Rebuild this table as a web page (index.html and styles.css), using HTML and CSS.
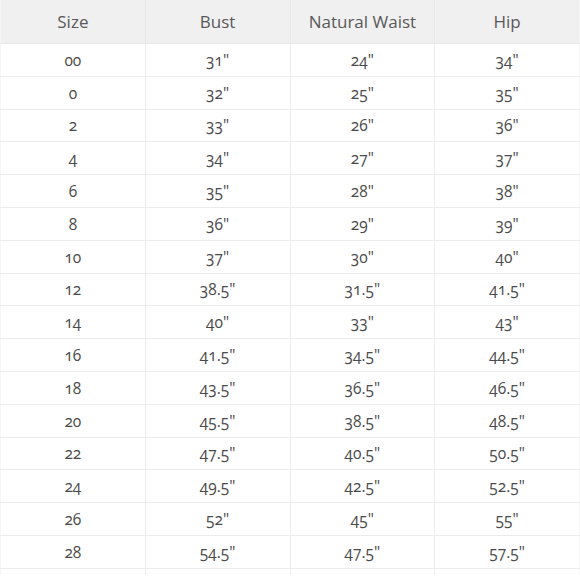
FILE: index.html
```html
<!DOCTYPE html>
<html>
<head>
<meta charset="utf-8">
<link rel="stylesheet" href="styles.css">
</head>
<body>
<table class="sizes">
  <thead>
    <tr><th>Size</th><th>Bust</th><th>Natural Waist</th><th>Hip</th></tr>
  </thead>
  <tbody>
    <tr><td>00</td><td>31"</td><td>24"</td><td>34"</td></tr>
    <tr><td>0</td><td>32"</td><td>25"</td><td>35"</td></tr>
    <tr><td>2</td><td>33"</td><td>26"</td><td>36"</td></tr>
    <tr><td>4</td><td>34"</td><td>27"</td><td>37"</td></tr>
    <tr><td>6</td><td>35"</td><td>28"</td><td>38"</td></tr>
    <tr><td>8</td><td>36"</td><td>29"</td><td>39"</td></tr>
    <tr><td>10</td><td>37"</td><td>30"</td><td>40"</td></tr>
    <tr><td>12</td><td>38.5"</td><td>31.5"</td><td>41.5"</td></tr>
    <tr><td>14</td><td>40"</td><td>33"</td><td>43"</td></tr>
    <tr><td>16</td><td>41.5"</td><td>34.5"</td><td>44.5"</td></tr>
    <tr><td>18</td><td>43.5"</td><td>36.5"</td><td>46.5"</td></tr>
    <tr><td>20</td><td>45.5"</td><td>38.5"</td><td>48.5"</td></tr>
    <tr><td>22</td><td>47.5"</td><td>40.5"</td><td>50.5"</td></tr>
    <tr><td>24</td><td>49.5"</td><td>42.5"</td><td>52.5"</td></tr>
    <tr><td>26</td><td>52"</td><td>45"</td><td>55"</td></tr>
    <tr><td>28</td><td>54.5"</td><td>47.5"</td><td>57.5"</td></tr>
    <tr class="cut"><td></td><td></td><td></td><td></td></tr>
  </tbody>
</table>
</body>
</html>
```
FILE: styles.css
```css
html, body {
  margin: 0;
  padding: 0;
  background: #ffffff;
  overflow: hidden;
}
.sizes {
  width: 580px;
  table-layout: fixed;
  border-collapse: collapse;
  font-family: "Open Sans", "Noto Sans", sans-serif;
  color: #4a4a4a;
  font-variant-numeric: oldstyle-nums;
}
.sizes th {
  height: 43px;
  padding: 0;
  background: #f0f0f0;
  font-weight: normal;
  font-size: 17px;
  text-align: center;
  border-left: 1px solid #e8e8e8;
  border-bottom: 1px solid #e8e8e8;
  color: #595959;
}
.sizes td {
  height: 31.8px;
  padding: 0;
  font-size: 15.5px;
  text-align: center;
  border-left: 1px solid #ececec;
  border-bottom: 1px solid #ececec;
}
.sizes th:first-child, .sizes td:first-child {
  border-left: 1px solid #f6f6f6;
}
.sizes th:last-child, .sizes td:last-child {
  border-right: 1px solid #f6f6f6;
}
.sizes tr.cut td {
  height: 6px;
  border-bottom: none;
}
```
